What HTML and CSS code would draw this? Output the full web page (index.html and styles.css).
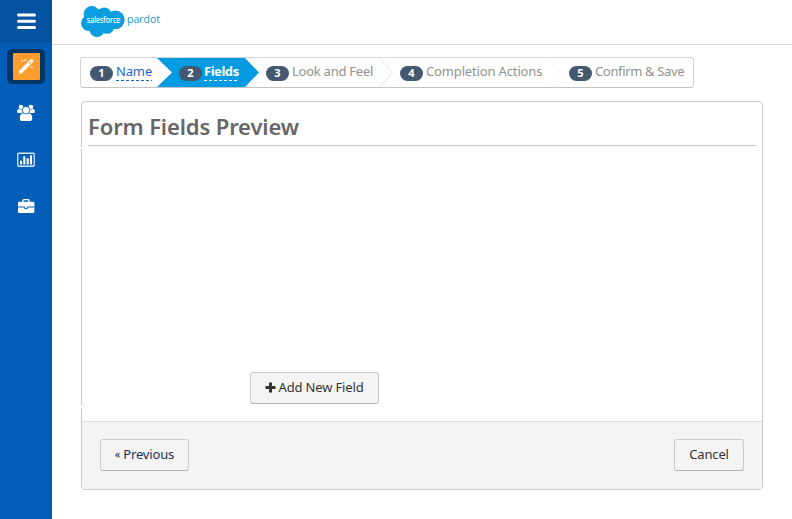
FILE: index.html
```html
<!DOCTYPE html>
<html lang="en">
<head>
<meta charset="utf-8">
<title>Form Fields Preview</title>
<link rel="stylesheet" href="styles.css">
</head>
<body>
<nav class="sidebar">
  <a class="menu"><svg width="52" height="43"><path d="M18.5 15h16M18.5 21.3h16M18.5 27.6h16" stroke="#fff" stroke-width="3" stroke-linecap="round"/></svg></a>
  <a class="nav-item active"><svg width="27" height="27" viewBox="0 0 27 27"><rect width="27" height="27" rx="1" fill="#ff9d2e"/><path d="M7.8 18.7 18.5 8" stroke="#fff" stroke-width="3.6" stroke-linecap="round"/><path d="m15.9 9.9 1.5-1.5.9.9-1.5 1.5z" fill="#ff9d2e"/><path d="M9.2 7v2M8.2 8h2M12.2 6.1v2M11.2 7.1h2M18.8 13.3v2M17.8 14.3h2" stroke="#fff" stroke-width=".8"/></svg></a>
  <a class="nav-item"><svg width="18" height="18" viewBox="0 0 18 18" fill="#fff"><circle cx="4" cy="3" r="2.3"/><circle cx="14" cy="3" r="2.3"/><path d="M.2 9V7Q.2 5 2 5q2 1 3.6.2L5 9H1.2Q.2 9 .2 8zM17.8 9V7q0-2-1.8-2-2 1-3.6.2L13 9h3.8q1 0 1-1z"/><circle cx="9" cy="6.2" r="3.8" stroke="#045db7" stroke-width=".8"/><path d="M5.8 9.2Q9 11.2 12.2 9.2q3 .6 3 5.2 0 2.6-2.6 2.6H5.4q-2.6 0-2.6-2.6 0-4.6 3-5.2"/></svg></a>
  <a class="nav-item"><svg width="18" height="16" viewBox="0 0 18 16"><rect x=".75" y="1.25" width="16.5" height="13" rx="1" fill="none" stroke="#d5e7f8" stroke-width="1.3"/><path d="M4 8.8V12.5M7.3 4.2V12.5M10.7 6.2V12.5M14 3.2V12.5" stroke="#fff" stroke-width="2.1"/></svg></a>
  <a class="nav-item"><svg width="18" height="16" viewBox="0 0 18 16"><path d="M6 4V2.5Q6 1.7 7 1.7h4q1 0 1 .8V4" fill="none" stroke="#fff" stroke-width="1.3"/><rect x="1" y="3.7" width="16.4" height="11.3" rx="1.3" fill="#fff"/><path d="M1 9h6.8v1.7h2.6V9h7" fill="none" stroke="#045db7"/></svg></a>
</nav>
<div class="page">
  <header class="header">
    <svg width="85" height="38" viewBox="81 3 85 38">
      <g fill="#0b9de0"><circle cx="91.7" cy="14.2" r="8.1"/><circle cx="104.2" cy="14.7" r="7.3"/><circle cx="115.4" cy="19.8" r="9.3"/><circle cx="88.8" cy="23.3" r="7.8"/><circle cx="97" cy="29.3" r="7.7"/><circle cx="107" cy="26.4" r="7.4"/><path d="M90 9h14l8 8-3 13H88z"/></g>
      <text class="brand" x="86.8" y="23" textLength="33.5" lengthAdjust="spacingAndGlyphs">salesforce</text>
      <text class="product" x="127" y="23" textLength="33" lengthAdjust="spacingAndGlyphs">pardot</text>
    </svg>
  </header>
  <main class="content">
    <ol class="steps">
      <li class="step done"><span class="num">1</span><a class="label name">Name</a></li>
      <li class="step current"><span class="num">2</span><a class="label fields">Fields</a></li>
      <li class="step look-step"><span class="num">3</span><span class="label look">Look and Feel</span><svg class="chevron" width="15" height="29"><path d="M.5 0 14 14.5.5 29" fill="none" stroke="#e4e4e4"/></svg></li>
      <li class="step complete-step"><span class="num">4</span><span class="label complete">Completion Actions</span><svg class="chevron" width="15" height="29"><path d="M.5 0 14 14.5.5 29" fill="none" stroke="#f4f4f4"/></svg></li>
      <li class="step"><span class="num">5</span><span class="label confirm">Confirm &amp; Save</span></li>
    </ol>
    <section class="panel">
      <div class="preview">
        <h1>Form Fields Preview</h1>
        <button class="btn add"><svg width="11" height="11"><path d="M5.5.5v10M.5 5.5h10" stroke="#333" stroke-width="3"/></svg><span>Add New Field</span></button>
      </div>
      <footer class="actions"><button class="btn previous"><span class="quote">«</span>Previous</button><button class="btn cancel">Cancel</button></footer>
    </section>
  </main>
</div>
</body>
</html>
```
FILE: styles.css
```css
* { box-sizing: border-box; }
body { margin: 0; height: 519px; display: flex; overflow: hidden; background: #fff; font: 13px/16px "Noto Sans", "Open Sans", sans-serif; color: #333; }
svg { display: block; flex: none; }
.sidebar { width: 52px; flex: none; background: #045db7; display: flex; flex-direction: column; align-items: center; }
.menu { height: 43px; background: #0453a1; }
.nav-item { height: 46.5px; width: 38px; display: flex; align-items: center; justify-content: center; }
.nav-item.active { height: 35px; margin: 6px 0; background: #043665; border-radius: 5px; }
.page { flex: 1; }
.header { height: 45px; border-bottom: 1px solid #d5dbe5; padding: 3px 0 0 29px; }
.brand { font: 8.5px "Open Sans", sans-serif; fill: #fff; stroke: #fff; stroke-width: .15px; }
.product { font: 11px "Open Sans", sans-serif; fill: #169bd7; }
.content { padding: 12px 29px 0 28px; }
.steps { list-style: none; margin: 0; padding: 0; width: 614px; height: 31px; border: 1px solid #d4d4d4; border-bottom-color: #c4c4c4; border-radius: 3px; display: flex; }
.step { display: flex; align-items: flex-start; height: 29px; color: #919191; }
.num { width: 23px; height: 15px; margin: 8px 3px 0 0; border-radius: 8px; background: #44586f; color: #fff; font: bold 11px/14px "Noto Sans", sans-serif; text-align: center; flex: none; }
.label { white-space: nowrap; margin-top: 5px; height: 18px; }
.done { width: 76px; padding-left: 9px; }
.done .label, .current .label { color: #2864cc; background: repeating-linear-gradient(90deg, #0b66ca 0 3px, transparent 3px 5px) 0 100% / 100% 1px no-repeat; }
.current { width: 102px; padding-left: 22px; background: #009be0; clip-path: polygon(0 0, 88px 0, 102px 14.5px, 88px 29px, 0 29px, 15px 14.5px); }
.current .label { color: #fff; background-image: repeating-linear-gradient(90deg, #fff 0 3px, transparent 3px 5px); font-weight: bold; }
.current .num { margin-right: 2px; }
.look-step { width: 135px; padding-left: 7px; }
.complete-step { width: 168px; padding-left: 6px; }
.step:last-child { padding-left: 7px; }
.chevron { margin-left: auto; }
.name { letter-spacing: -.15px; }
.fields { letter-spacing: -.45px; }
.look { letter-spacing: -.25px; }
.complete { letter-spacing: -.15px; }
.confirm { letter-spacing: -.35px; }
.panel { position: relative; width: 682px; height: 389px; margin: 13px 0 0 1px; border: 1px solid #c9cbcb; border-radius: 4px; }
.panel::before, .panel::after { content: ""; position: absolute; left: -1px; width: 1px; background: #fff; top: 45px; height: 2px; }
.panel::after { top: 303px; height: 3px; }
.preview { height: 319px; padding: 0 6px; }
h1 { margin: 0 0 226px; height: 44px; padding-top: 9px; border-bottom: 1px solid #c9c9c9; font: 600 22px/30px "Noto Sans", sans-serif; color: #666; letter-spacing: -.13px; }
.btn { height: 32px; padding: 0 0 2px; border: 1px solid #ccc; border-bottom-color: #b3b3b3; border-radius: 3px; background: #f4f4f4; color: #333; font: 13px/18px "Noto Sans", sans-serif; display: flex; align-items: center; justify-content: center; white-space: nowrap; letter-spacing: -.15px; }
.add { width: 129px; margin-left: 162px; gap: 2px; }
.actions { height: 68px; border-top: 1px solid #dedede; background: #f4f4f4; display: flex; justify-content: space-between; padding: 17px 18px; border-radius: 0 0 3px 3px; }
.previous { width: 89px; color: #203058; }
.quote { font-size: 11px; margin-right: 3px; }
.cancel { width: 70px; }
```
